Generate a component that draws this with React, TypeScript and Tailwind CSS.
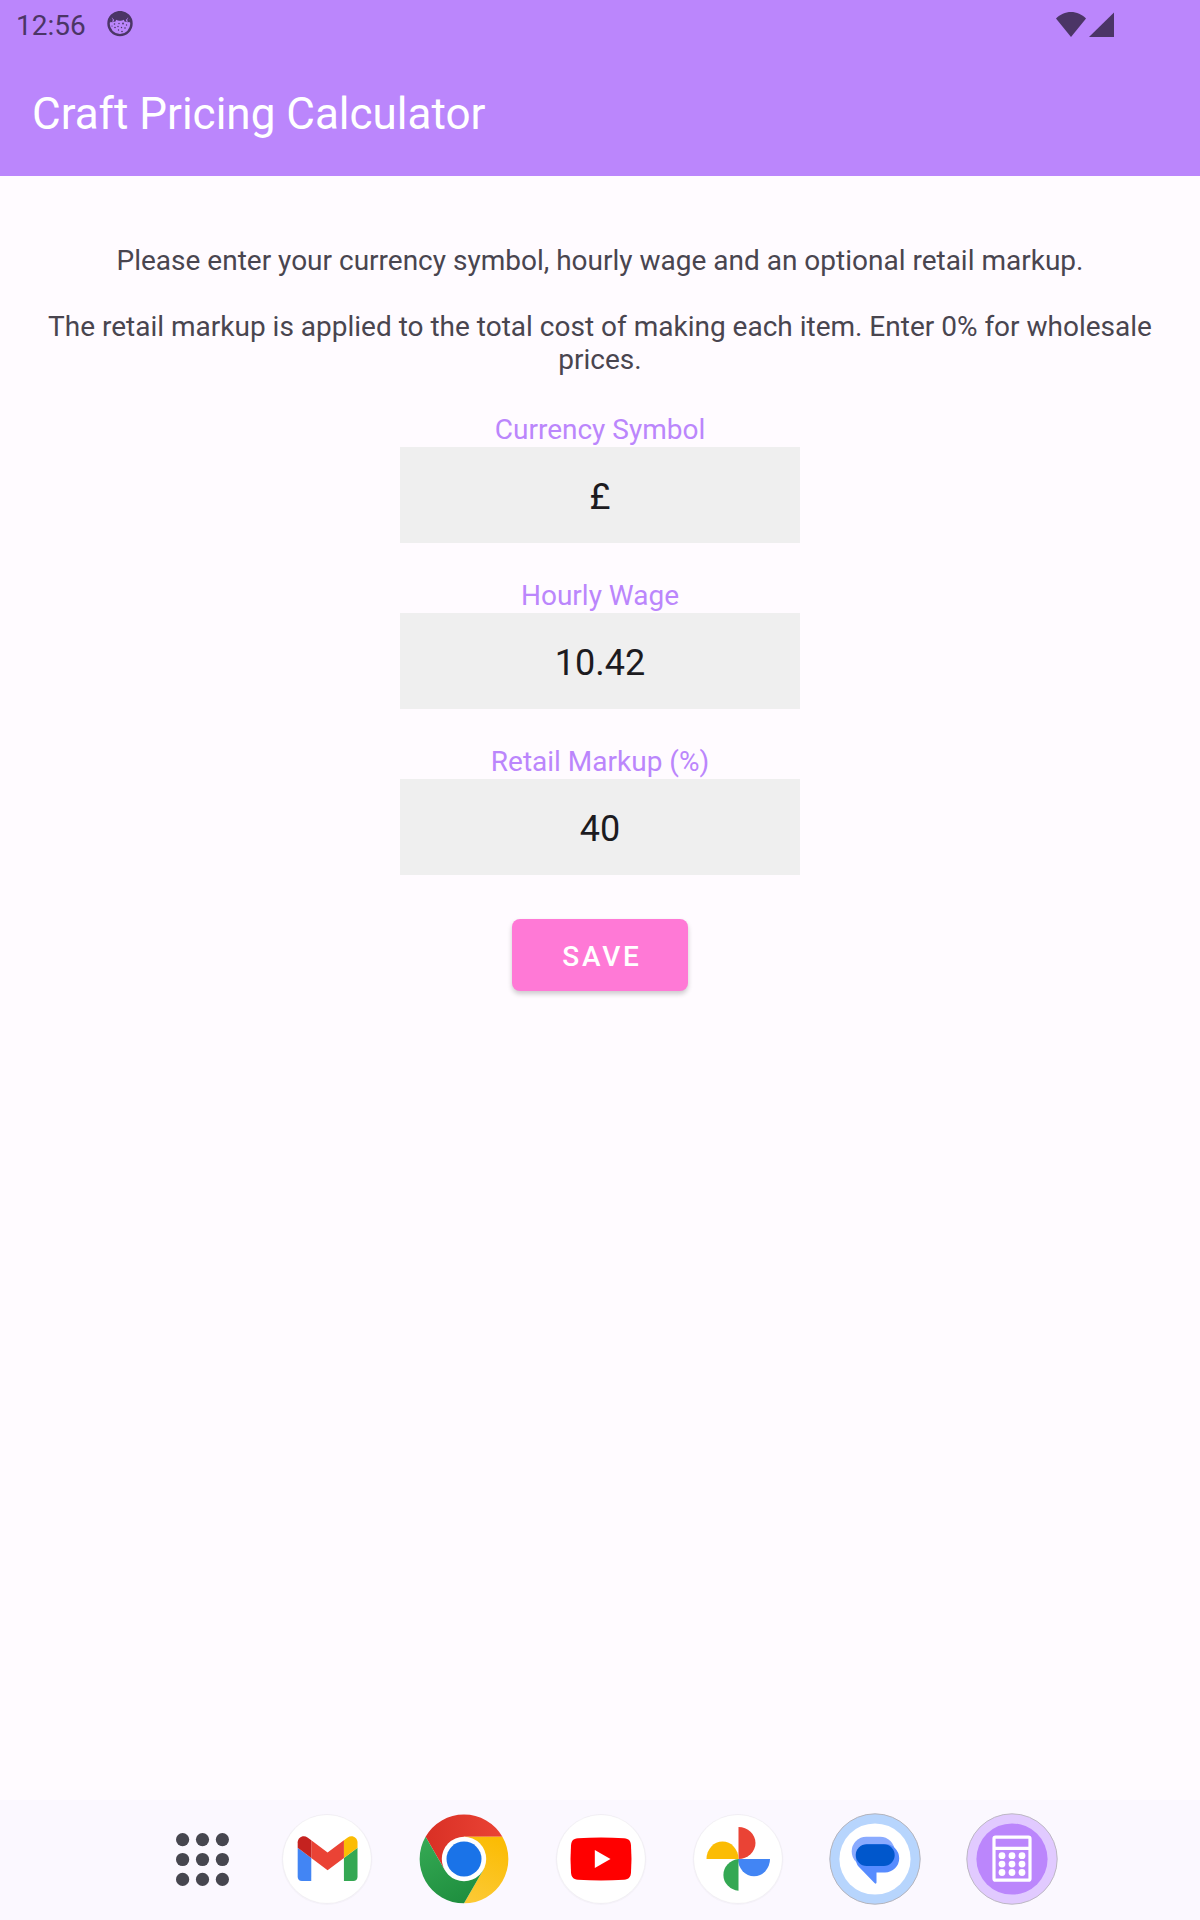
import { useState } from 'react';
import type { FormEvent, ReactNode } from 'react';

type Settings = {
  currency: string;
  wage: string;
  markup: string;
};

const WifiIcon = () => (
  <svg width="30" height="25" viewBox="0 0 30 25" fill="currentColor" aria-hidden="true">
    <path d="M0 6.5C4 2.4 9.3 0 15 0s11 2.4 15 6.5L15 25Z" />
  </svg>
);

const SignalIcon = () => (
  <svg width="25" height="25" viewBox="0 0 25 25" fill="currentColor" aria-hidden="true">
    <path d="M0 25 25 0.5V25Z" />
  </svg>
);

const FaceIcon = () => (
  <svg width="26" height="26" viewBox="0 0 26 26" fill="currentColor" aria-hidden="true">
    <circle cx="13" cy="12.6" r="11.5" fill="none" stroke="currentColor" strokeWidth="2.4" />
    <path d="M4.5 5.5C6.500 2.500 9.500 1.200 13 1.200s6.500 1.300 8.500 4.300c-.6 1.600-1.500 2.600-2.700 3.200l1 2.300-2.300-.6-.6-1.600C15.500 9.600 14.300 9.800 13 9.800s-2.500-.2-3.900-1l-.6 1.600-2.300.6 1-2.300C6 8.100 5.100 7.100 4.500 5.500Z" />
    <path d="M2 13 4 6l1.800 2.500-.5 3-1.500-.7ZM24 13 22 6l-1.800 2.500.5 3 1.500-.7Z" />
    <g>
      <circle cx="7.500" cy="13" r="0.8" />
      <circle cx="12" cy="12.500" r="0.7" />
      <circle cx="16" cy="12.500" r="0.9" />
      <circle cx="19.500" cy="14" r="0.7" />
      <circle cx="5" cy="15" r="0.6" />
      <circle cx="8" cy="16.500" r="0.8" />
      <circle cx="11" cy="15.500" r="0.7" />
      <circle cx="14.500" cy="16.500" r="0.7" />
      <circle cx="18" cy="17" r="0.8" />
      <circle cx="11.500" cy="19" r="0.7" />
      <circle cx="15" cy="20.500" r="0.8" />
    </g>
  </svg>
);

const IconCanvas = ({ children }: { children: ReactNode }) => (
  <svg
    className="size-full overflow-visible"
    viewBox="-45 -45 90 90"
    aria-hidden="true"
  >
    {children}
  </svg>
);

const WhiteDisc = () => (
  <>
    <circle cy="0.500" r="45.500" fill="#000" opacity="0.025" />
    <circle r="44.300" fill="#fff" stroke="#000" strokeOpacity="0.03" />
  </>
);

const GmailIcon = () => (
  <IconCanvas>
    <WhiteDisc />
    <g transform="translate(0.6 -0.4) scale(0.68) translate(-96 -75)">
      <path fill="#4285f4" d="M58 108h14V74L52 59v43c0 3.320 2.690 6 6 6" />
      <path fill="#34a853" d="M120 108h14c3.320 0 6-2.690 6-6V59l-20 15" />
      <path fill="#fbbc04" d="M120 48v26l20-15v-8c0-7.420-8.470-11.650-14.400-7.200" />
      <path fill="#ea4335" d="M72 74V48l24 18 24-18v26L96 92" />
      <path fill="#c5221f" d="M52 51v8l20 15V48l-5.600-4.200c-5.940-4.450-14.400-.22-14.400 7.200" />
    </g>
  </IconCanvas>
);

const ChromeIcon = () => (
  <IconCanvas>
    <defs>
      <linearGradient id="chrome-red" x1="0" y1="0" x2="1" y2="0">
        <stop offset="0" stopColor="#d93025" />
        <stop offset="1" stopColor="#ea4335" />
      </linearGradient>
      <linearGradient id="chrome-yellow" x1="0.600" y1="0" x2="0.300" y2="1">
        <stop offset="0" stopColor="#fbbc04" />
        <stop offset="1" stopColor="#fcc934" />
      </linearGradient>
      <linearGradient id="chrome-green" x1="0.200" y1="0" x2="0.700" y2="1">
        <stop offset="0" stopColor="#34a853" />
        <stop offset="1" stopColor="#1e8e3e" />
      </linearGradient>
    </defs>
    <path fill="url(#chrome-red)" d="M0 0-19.200 11.100-38.400-22.200A44.300 44.300 0 0 1 38.400-22.200H0Z" />
    <path fill="url(#chrome-yellow)" d="M0 0V-22.200H38.400A44.300 44.300 0 0 1 0 44.300L19.200 11.100Z" />
    <path fill="url(#chrome-green)" d="M0 0 19.200 11.100 0 44.300A44.300 44.300 0 0 1-38.400-22.200L-19.200 11.100Z" />
    <circle r="22.200" fill="#fff" />
    <circle r="17.500" fill="#1a73e8" />
  </IconCanvas>
);

const YoutubeIcon = () => (
  <IconCanvas>
    <WhiteDisc />
    <path
      fill="#f00"
      d="M-23-20.700Q0-22.300 23-20.700C28-20.200 29.600-18 30-13.500Q31 0 30 13.500C29.600 18 28 20.200 23 20.700Q0 22.300-23 20.700C-28 20.200-29.600 18-30 13.500Q-31 0-30-13.500C-29.600-18-28-20.200-23-20.700Z"
    />
    <path fill="#fff" d="M-6.200-9 9.500 0-6.200 9Z" />
  </IconCanvas>
);

const PhotosIcon = () => (
  <IconCanvas>
    <WhiteDisc />
    <path fill="#ea4335" d="M.5-32A17 16 0 0 1 .5 0Z" />
    <path fill="#4285f4" d="M32 0A16 17.300 0 0 1 0 0Z" />
    <path fill="#34a853" d="M.5 31.800A17 16 0 0 1 .5 0Z" />
    <path fill="#fbbc04" d="M-31.500 0A16 17.500 0 0 1 .5 0Z" />
  </IconCanvas>
);

const MessagesIcon = () => (
  <IconCanvas>
    <circle r="45.200" fill="#b7d5fd" stroke="#b4b4bc" />
    <circle r="35.600" fill="#fff" />
    <rect x="-23.300" y="-22.300" width="43" height="29.300" rx="14.600" fill="#8aabff" />
    <path
      fill="#578cff"
      d="M-5-15H10A14.200 14.200 0 0 1 10 13.400H1.500V23.500Q1.300 25.500-.5 24L-16.500 7.500C-21.500 1.500-20-15-5-15Z"
    />
    <rect x="-19.300" y="-14.800" width="39" height="21.800" rx="10.900" fill="#0057cc" />
  </IconCanvas>
);

const CalculatorIcon = () => (
  <IconCanvas>
    <circle r="45.200" fill="#e1caff" stroke="#bdb8c4" />
    <circle r="35.600" fill="#bb86fc" />
    <rect x="-18" y="-21.800" width="36" height="43" rx="1.500" fill="none" stroke="#fff" strokeWidth="3.200" />
    <path d="M-18-10.700H18" stroke="#fff" strokeWidth="3.200" />
    {[-3.300, 5.100, 13.500].map((y) =>
      [-10, 0, 10].map((x) => <circle key={`${x}${y}`} cx={x} cy={y} r="3.400" fill="#fff" />)
    )}
  </IconCanvas>
);

const dockApps = [
  { name: 'Gmail', icon: <GmailIcon /> },
  { name: 'Chrome', icon: <ChromeIcon /> },
  { name: 'YouTube', icon: <YoutubeIcon /> },
  { name: 'Photos', icon: <PhotosIcon /> },
  { name: 'Messages', icon: <MessagesIcon /> },
  { name: 'Craft Pricing Calculator', icon: <CalculatorIcon /> },
];

const StatusBar = () => (
  <div className="flex h-12 items-center justify-between pl-4 pr-[86px] text-[#4b3566]">
    <div className="flex items-center gap-[21px]">
      <span className="pt-0.5 text-[28px] leading-[33px]">12:56</span>
      <FaceIcon />
    </div>
    <div className="flex items-center gap-[3px]">
      <WifiIcon />
      <SignalIcon />
    </div>
  </div>
);

const Dock = () => (
  <nav
    aria-label="Dock"
    className="flex h-[120px] items-center justify-center gap-[47px] bg-[#fbf8ff] pb-0.5 pl-px"
  >
    <button type="button" aria-label="All apps" className="flex size-[90px] items-center justify-end pr-1.5">
      <svg width="53" height="53" viewBox="0 0 53 53" fill="#46464f" aria-hidden="true">
        {[6.600, 26.500, 46.400].map((y) =>
          [6.600, 26.500, 46.400].map((x) => <circle key={`${x}-${y}`} cx={x} cy={y} r="6.600" />)
        )}
      </svg>
    </button>
    {dockApps.map((app) => (
      <button key={app.name} type="button" aria-label={app.name} className="size-[90px]">
        {app.icon}
      </button>
    ))}
  </nav>
);

type FieldProps = {
  id: string;
  label: string;
  value: string;
  onChange: (value: string) => void;
};

const Field = ({ id, label, value, onChange }: FieldProps) => (
  <div className="flex w-1/3 flex-col gap-px">
    <label htmlFor={id} className="text-center text-[28px] leading-[33px] text-[#bb86fc]">
      {label}
    </label>
    <input
      id={id}
      type="text"
      value={value}
      onChange={(e) => onChange(e.target.value)}
      className="h-24 w-full bg-[#efefef] pt-1 text-center text-4xl text-[#1c1b1f] outline-none"
    />
  </div>
);

const App = () => {
  const [settings, setSettings] = useState<Settings>({
    currency: '£',
    wage: '10.42',
    markup: '40',
  });

  const update = (key: keyof Settings) => (value: string) =>
    setSettings((prev) => ({ ...prev, [key]: value }));

  const onSubmit = (e: FormEvent) => {
    e.preventDefault();
    //TODO persist settings
  };

  return (
    <div className="flex min-h-screen flex-col bg-[#fffbff] font-['Roboto',sans-serif]">
      <header className="bg-[#bb86fc]">
        <StatusBar />
        <div className="flex h-32 items-center px-8 pt-1">
          <h1 className="text-[44px] leading-[52px] text-white">Craft Pricing Calculator</h1>
        </div>
      </header>

      <main className="flex-1 px-8 pt-[68px]">
        <div className="flex flex-col gap-[33px] text-center text-[28px] leading-[33px] text-[#49454f]">
          <p>Please enter your currency symbol, hourly wage and an optional retail markup.</p>
          <p>
            The retail markup is applied to the total cost of making each item. Enter 0% for
            wholesale prices.
          </p>
        </div>

        <form onSubmit={onSubmit} className="-mx-8 mt-[37px] flex flex-col items-center gap-9">
          <Field
            id="currency"
            label="Currency Symbol"
            value={settings.currency}
            onChange={update('currency')}
          />
          <Field
            id="wage"
            label="Hourly Wage"
            value={settings.wage}
            onChange={update('wage')}
          />
          <Field
            id="markup"
            label="Retail Markup (%)"
            value={settings.markup}
            onChange={update('markup')}
          />
          <button
            type="submit"
            className="mt-2 h-[72px] w-44 rounded-lg bg-[#ff79d6] pl-1 pt-1 text-[28px] font-medium uppercase tracking-widest text-white shadow-[0_3px_5px_rgba(0,0,0,0.2)]"
          >
            Save
          </button>
        </form>
      </main>

      <Dock />
    </div>
  );
};
export default App;
